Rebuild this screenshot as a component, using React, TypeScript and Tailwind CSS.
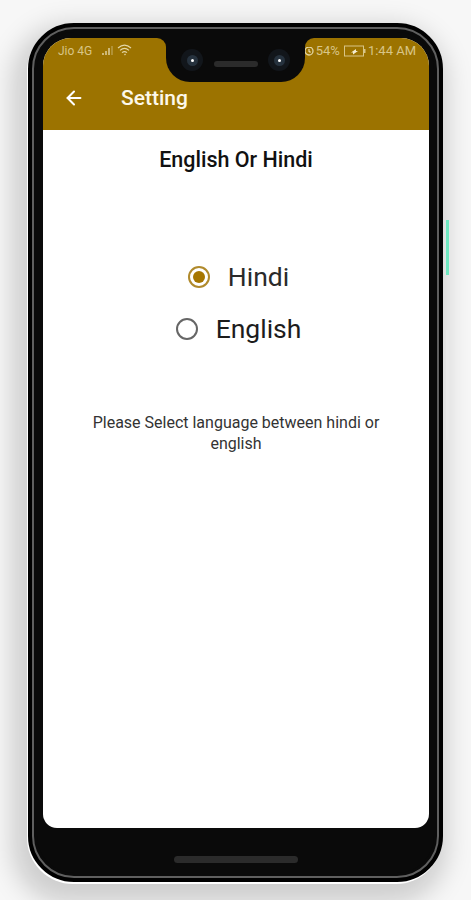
import { ArrowLeft } from "lucide-react";

function Camera() {
  return (
    <div className="flex h-[22px] w-[22px] items-center justify-center rounded-full bg-[#12161b]">
      <div className="flex h-[11px] w-[11px] items-center justify-center rounded-full bg-[#26323e]">
        <div className="h-[3px] w-[3px] rounded-full bg-white" />
      </div>
    </div>
  );
}

function Radio({ checked }: { checked?: boolean }) {
  return (
    <div
      className={
        checked
          ? "flex h-[22px] w-[22px] items-center justify-center rounded-full border-2 border-[#b08a2c]"
          : "h-[22px] w-[22px] rounded-full border-2 border-[#666666]"
      }
    >
      {checked && <div className="h-[12px] w-[12px] rounded-full bg-[#a67600]" />}
    </div>
  );
}

function SignalIcon() {
  return (
    <svg width="14" height="11" viewBox="0 0 14 11" fill="#cdb877">
      <path d="M1 10h2V8H1zM4 10h2V6H4zM7 10h2V3H7z" />
      <path d="M10 10h2V1h-2z" opacity="0.45" />
    </svg>
  );
}

function WifiIcon() {
  return (
    <svg width="15" height="13" viewBox="0 0 15 13" fill="none" stroke="#e3d6a6" strokeWidth="1.2">
      <path d="M1 4c4-3.4 9-3.4 13 0M3 6.4c2.8-2.4 6.2-2.4 9 0M5 8.6c1.5-1.2 3.5-1.2 5 0M7.5 11l1-1" />
    </svg>
  );
}

function AlarmIcon() {
  return (
    <svg width="10" height="13" viewBox="0 0 10 13" fill="none" stroke="#e3d6a6" strokeWidth="1.3">
      <circle cx="5" cy="7" r="4" />
      <path d="M5 5v2.4l1.6 1M1 2.6L3 1M9 2.6L7 1" />
    </svg>
  );
}

function BatteryIcon() {
  return (
    <svg width="22" height="12" viewBox="0 0 22 12" fill="none">
      <rect x="0.5" y="1" width="19" height="10" stroke="#d8c587" />
      <rect x="20" y="4" width="1.5" height="4" fill="#d8c587" />
      <path d="M7 7.5l5-3.5v2h2l-5 3.5v-2z" fill="#f3ecd0" />
    </svg>
  );
}

export default function App() {
  return (
    <div
      className="relative h-[900px] w-[471px] overflow-hidden bg-[#f7f7f7] pl-[28px] pt-[23px]"
      style={{ fontFamily: "Roboto, sans-serif" }}
    >
      {/* phone body */}
      <div className="relative h-[859px] w-[415px] rounded-[46px] border-[4px] border-black bg-[#5f5f5f] p-[2px] shadow-[-1px_2px_0_0_#ffffff,-6px_12px_26px_10px_rgba(0,0,0,0.17)]">
        <div className="h-full w-full rounded-[40px] border-[3px] border-[#0a0a0a] bg-[#0a0a0a] pl-[6px] pt-[6px]">
          <div className="flex h-[790px] w-[386px] flex-col overflow-hidden rounded-t-[28px] rounded-b-[14px] bg-white">
            <header className="h-[92px] bg-[#9c7300]">
              <div className="flex h-[24px] items-center pl-[15px] pr-[13px] pt-[1px] text-[12px] text-[#d8c587]">
                <span>Jio 4G</span>
                <span className="ml-[9px]">
                  <SignalIcon />
                </span>
                <span className="ml-[2px]">
                  <WifiIcon />
                </span>
                <span className="ml-auto">
                  <AlarmIcon />
                </span>
                <span className="ml-[2px] text-[13px]">54%</span>
                <span className="ml-[4px]">
                  <BatteryIcon />
                </span>
                <span className="ml-[2px] text-[13px]">1:44 AM</span>
              </div>
              <div className="flex items-center pl-[20px] pt-[21px]">
                <ArrowLeft size={22} strokeWidth={2.2} className="text-white" />
                <span className="ml-[36px] text-[21px] font-medium leading-[30px] text-[#fdf8ea]">Setting</span>
              </div>
            </header>

            <main className="flex flex-1 flex-col items-center text-[#1c1c1c]">
              <h1 className="mt-[16px] text-[21.5px] font-medium leading-[28px] text-[#111111]">English Or Hindi</h1>
              <div className="mt-[85px] flex items-center gap-[18px] pl-[5px] text-[26.5px] leading-[36px] text-[#2a2a2a]">
                <Radio checked />
                <span>Hindi</span>
              </div>
              <div className="mt-[16px] flex items-center gap-[18px] pl-[5px] text-[26.5px] leading-[36px] text-[#1c1c1c]">
                <Radio />
                <span>English</span>
              </div>
              <p className="mt-[65px] w-[310px] text-center text-[16px] leading-[21px] text-[#333333]">
                Please Select language between hindi or english
              </p>
            </main>
          </div>
          <div className="mx-auto mt-[28px] h-[7px] w-[124px] -translate-x-[3px] rounded-full bg-[#2b2b2b]" />
        </div>

        {/* notch over the top of the screen */}
        <div className="absolute left-[134px] top-[7px] flex h-[48px] w-[139px] items-center justify-between rounded-b-[24px] bg-[#0a0a0a] px-[15px] pb-[1px] pt-[5px]">
          <Camera />
          <div className="mt-[8px] h-[6px] w-[44px] rounded-full bg-[#2b2b2b]" />
          <Camera />
          <div className="absolute -left-[9px] top-[4px] h-[9px] w-[9px] bg-[#0a0a0a]">
            <div className="h-full w-full rounded-tr-[9px] bg-[#9c7300]" />
          </div>
          <div className="absolute -right-[9px] top-[4px] h-[9px] w-[9px] bg-[#0a0a0a]">
            <div className="h-full w-full rounded-tl-[9px] bg-[#9c7300]" />
          </div>
        </div>
      </div>

      {/* side buttons */}
      <div className="absolute left-[446px] top-[220px] h-[55px] w-[3px] bg-[#6fe6c0]" />
      <div className="absolute left-[446px] top-[330px] h-[110px] w-[3px] bg-[#e6e6e6]" />
    </div>
  );
}
